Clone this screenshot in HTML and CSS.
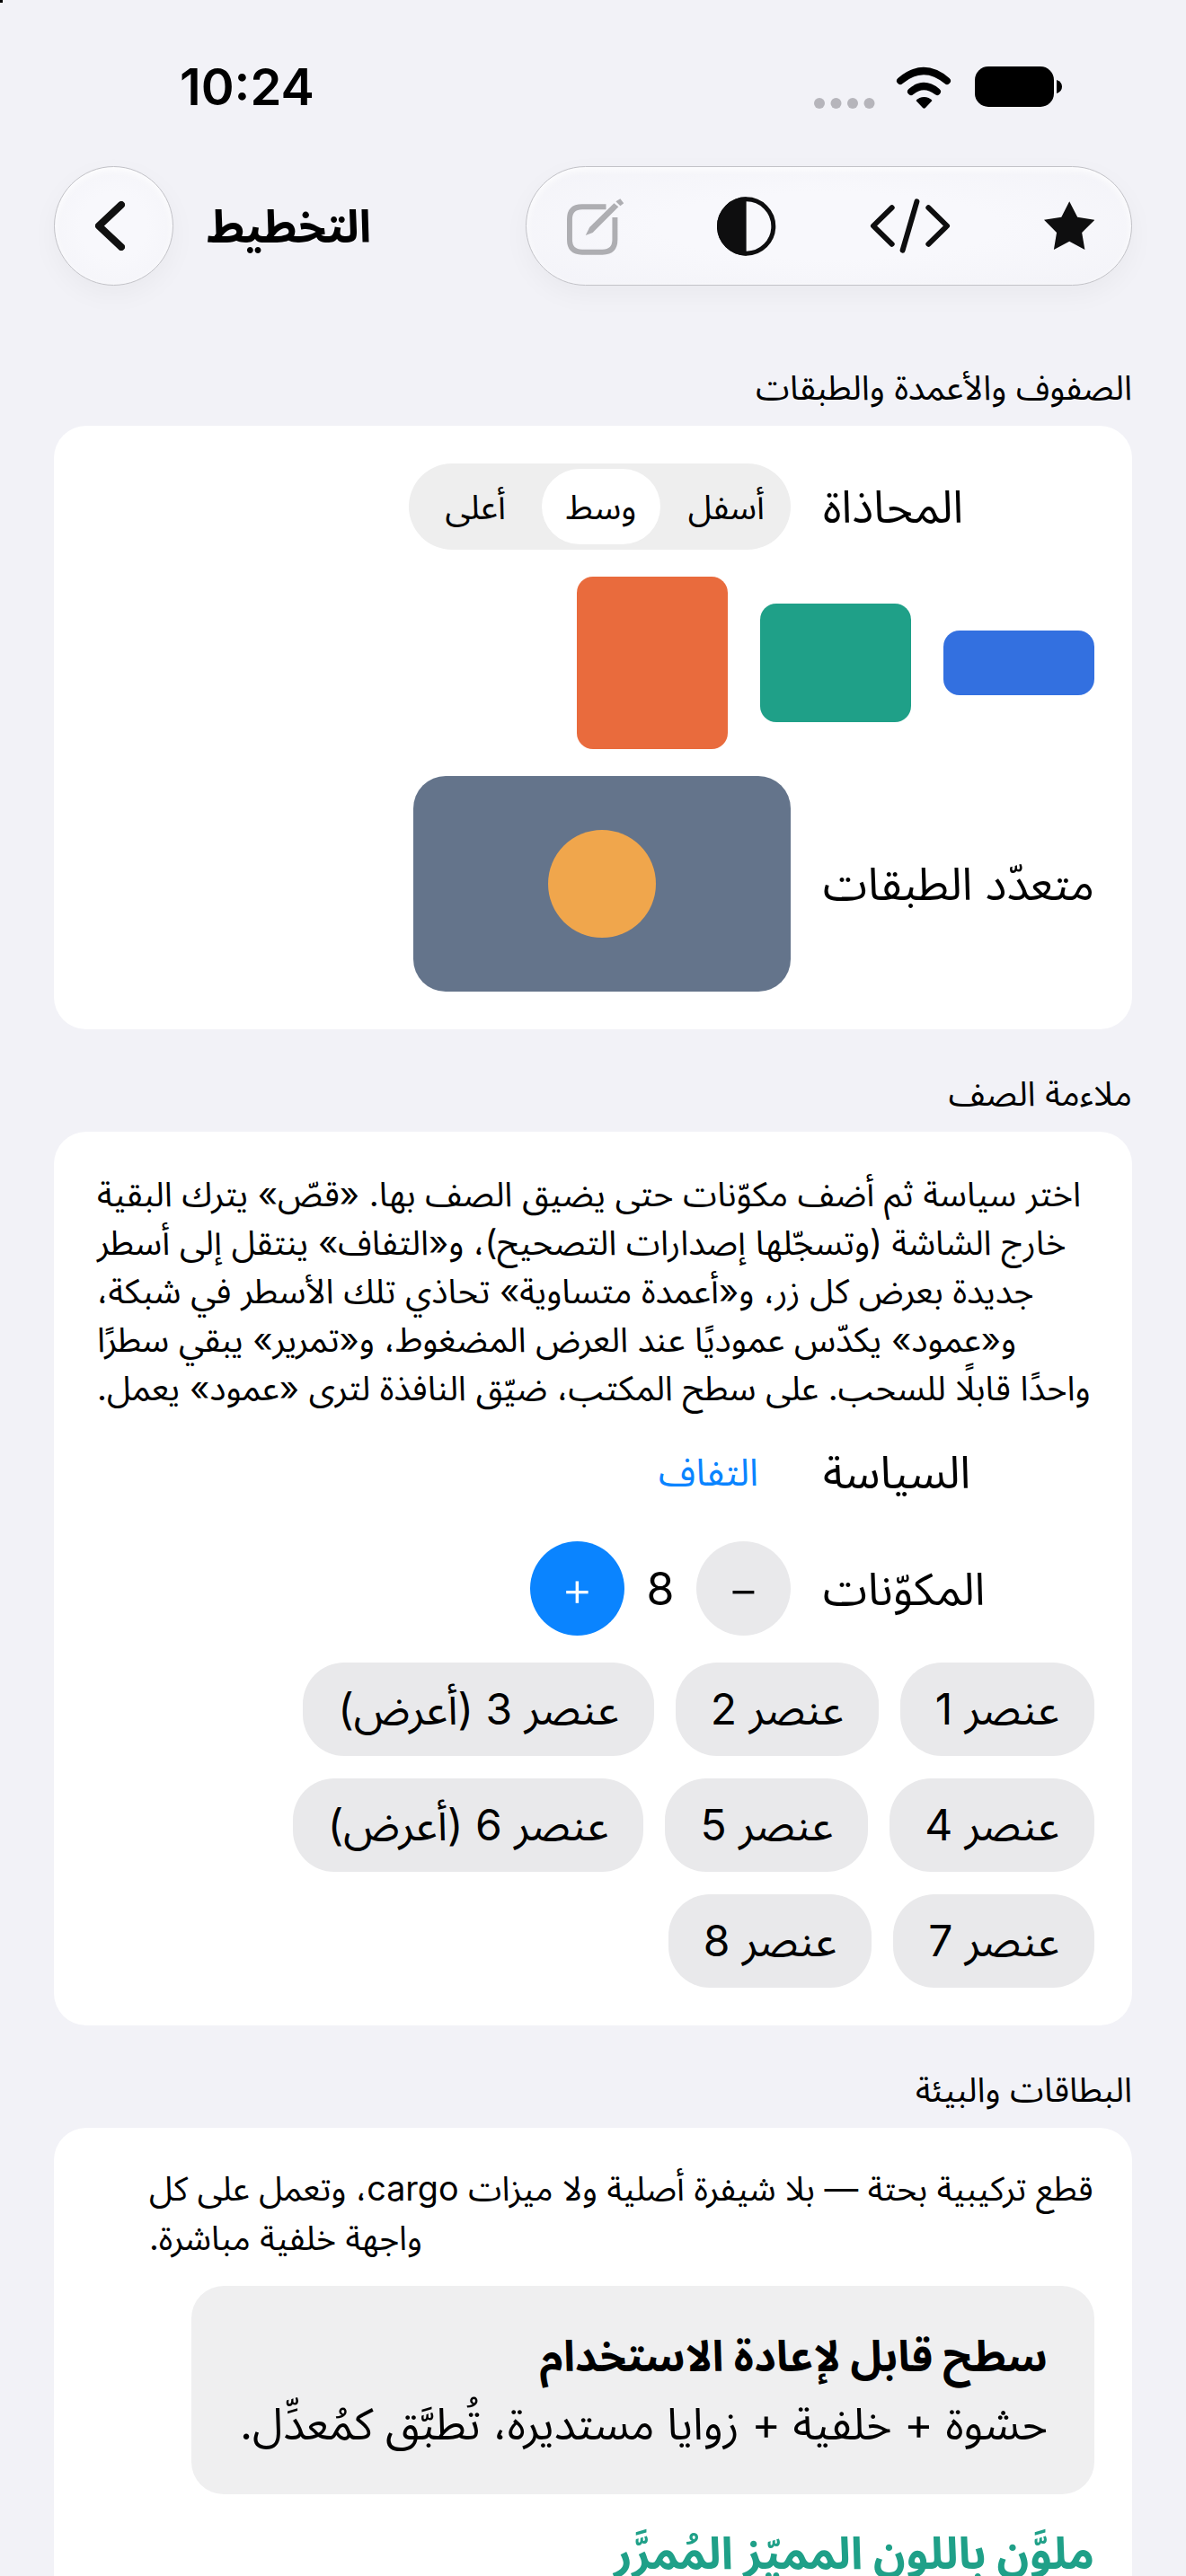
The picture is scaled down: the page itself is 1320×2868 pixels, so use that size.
FILE: index.html
```html
<!DOCTYPE html>
<html lang="ar">
<head>
<meta charset="utf-8">
<title>التخطيط</title>
<link rel="stylesheet" href="styles.css">
</head>
<body>
<div class="speck"></div>
<header class="status">
  <span class="time">10:24</span>
  <svg class="status-icons" viewBox="900 70 290 55" aria-hidden="true">
    <g fill="#b6b5bb"><circle cx="912" cy="115" r="6"/><circle cx="930.500" cy="115" r="6"/><circle cx="949" cy="115" r="6"/><circle cx="967.500" cy="115" r="6"/></g>
    <g fill="none" stroke="#000" stroke-width="8" stroke-linecap="round"><path d="M1002 90Q1028 68 1054 90"/><path d="M1014 102Q1028 90 1043 102"/></g>
    <path d="M1028.500 108Q1034 108 1037.500 112L1030 120Q1028.500 121.500 1027 120L1019.500 112Q1023 108 1028.500 108Z"/>
    <rect x="1085" y="74" width="88" height="45" rx="15"/>
    <path d="M1176 89Q1182 91 1182 96.500Q1182 102 1176 104Z"/>
  </svg>
</header>
<nav class="nav">
  <div class="nav-start">
    <button class="glass back" type="button">
      <svg class="chev" viewBox="0 0 33 55"><path d="M29 4L4 27.500L29 51"/></svg>
    </button>
    <h1 class="title">التخطيط</h1>
  </div>
  <div class="glass pill">
    <svg class="ic-edit" viewBox="0 0 64 64">
      <path class="edit-box" d="M44 10H17Q3 10 3 24V47Q3 61 17 61H40Q54 61 54 47V22"/>
      <path class="edit-pen" d="M21 42L25.500 33L53 6L58 10L29 39Z"/><path class="edit-pen" d="M55 4L60 1L64 6L60 9Z"/>
    </svg>
    <svg class="ic-contrast" viewBox="0 0 66 66">
      <circle cx="33" cy="33" r="30.500"/><path d="M33 0A33 33 0 0 0 33 66Z"/>
    </svg>
    <svg class="ic-code" viewBox="0 0 91 61">
      <path d="M25 10L4 30.500L25 51"/><path d="M53 3L37 58"/><path d="M66 10L87 30.500L66 51"/>
    </svg>
    <svg class="ic-star" viewBox="0 0 57 55">
      <path d="M28.500 0L37.600 17.700L57 20.700L42.600 35L45.900 54.300L28.500 45L11 54.300L14.200 35L0 20.700L19.500 17.700Z"/>
    </svg>
  </div>
</nav>
<main class="content" dir="rtl">
  <section class="section">
    <h2 class="section-title">الصفوف والأعمدة والطبقات</h2>
    <div class="card card-rows">
      <div class="row">
        <span class="label">المحاذاة</span>
        <div class="segmented">
          <span class="seg">أسفل</span>
          <span class="seg seg-on">وسط</span>
          <span class="seg">أعلى</span>
        </div>
      </div>
      <div class="blocks">
        <div class="block block-blue"></div>
        <div class="block block-green"></div>
        <div class="block block-orange"></div>
      </div>
      <div class="row">
        <span class="label">متعدّد الطبقات</span>
        <div class="stack"><div class="dot"></div></div>
      </div>
    </div>
  </section>
  <section class="section">
    <h2 class="section-title">ملاءمة الصف</h2>
    <div class="card">
      <p class="para">اختر سياسة ثم أضف مكوّنات حتى يضيق الصف بها. «قصّ» يترك البقية<br>خارج الشاشة (وتسجّلها إصدارات التصحيح)، و«التفاف» ينتقل إلى أسطر<br>جديدة بعرض كل زر، و«أعمدة متساوية» تحاذي تلك الأسطر في شبكة،<br>و«عمود» يكدّس عموديًا عند العرض المضغوط، و«تمرير» يبقي سطرًا<br>واحدًا قابلًا للسحب. على سطح المكتب، ضيّق النافذة لترى «عمود» يعمل.</p>
      <div class="row row-policy">
        <span class="label">السياسة</span>
        <span class="value">التفاف</span>
      </div>
      <div class="row row-stepper">
        <span class="label">المكوّنات</span>
        <div class="stepper">
          <span class="round round-minus">−</span>
          <span class="count">8</span>
          <span class="round round-plus">+</span>
        </div>
      </div>
      <div class="chips">
        <span class="chip">عنصر 1</span>
        <span class="chip">عنصر 2</span>
        <span class="chip">عنصر 3 (أعرض)</span>
        <span class="chip">عنصر 4</span>
        <span class="chip">عنصر 5</span>
        <span class="chip">عنصر 6 (أعرض)</span>
        <span class="chip">عنصر 7</span>
        <span class="chip">عنصر 8</span>
      </div>
    </div>
  </section>
  <section class="section">
    <h2 class="section-title">البطاقات والبيئة</h2>
    <div class="card card-env">
      <p class="para para-env">قطع تركيبية بحتة — بلا شيفرة أصلية ولا ميزات cargo، وتعمل على كل<br>واجهة خلفية مباشرة.</p>
      <div class="surface">
        <h3 class="surface-title">سطح قابل لإعادة الاستخدام</h3>
        <p class="surface-text">حشوة + خلفية + زوايا مستديرة، تُطبَّق كمُعدِّل.</p>
      </div>
      <h3 class="accent">ملوَّن باللون المميّز المُمرَّر</h3>
    </div>
  </section>
</main>
</body>
</html>
```
FILE: styles.css
```css
* { box-sizing: border-box; }
html, body { height: 2868px; overflow: hidden; }
body {
  margin: 0;
  position: relative;
  background: #f2f2f7;
  color: #000;
  font-family: Inter, "Noto Sans Arabic", "Noto Sans", sans-serif;
}
.speck { position: absolute; left: 0; top: 0; width: 3px; height: 3px; background: #000; }

.status { display: flex; justify-content: space-between; height: 185px; padding: 70px 130px 0 200px; }
.time { margin-top: 1px; font-size: 56px; font-weight: 600; line-height: 52px; }
.status-icons { width: 290px; height: 55px; }

.nav { display: flex; justify-content: space-between; height: 133px; padding: 0 60px; }
.nav-start { display: flex; align-items: center; gap: 37px; }
.glass {
  background: radial-gradient(ellipse at center, #f8f8fc 40%, #f3f3f8 100%);
  border: 1px solid #c2c2c7;
  box-shadow: 0 10px 30px rgba(0, 0, 0, .04), inset 0 3px 8px rgba(255, 255, 255, .9);
}
.back { display: flex; align-items: center; justify-content: center; width: 133px; height: 133px; padding: 0 8px 0 0; border-radius: 50%; }
.chev { width: 33px; height: 55px; fill: none; stroke: #111; stroke-width: 8; stroke-linecap: round; stroke-linejoin: round; }
.title { margin: 0; font-size: 50px; font-weight: 700; line-height: 60px; }
.pill { display: flex; align-items: center; gap: 104px; width: 675px; height: 133px; padding: 0 41px 0 45px; border-radius: 66.5px; }
.ic-edit { width: 64px; height: 64px; }
.edit-box { fill: none; stroke: #aeaeb2; stroke-width: 6; }
.edit-pen { fill: #aeaeb2; }
.ic-contrast { width: 66px; height: 66px; }
.ic-contrast circle { fill: none; stroke: #0e0e0f; stroke-width: 5; }
.ic-contrast path { fill: #0e0e0f; }
.ic-code { width: 91px; height: 61px; fill: none; stroke: #0e0e0f; stroke-width: 6; stroke-linecap: round; stroke-linejoin: round; }
.ic-star { width: 57px; height: 55px; fill: #0e0e0f; }

.content { display: flex; flex-direction: column; gap: 48px; padding: 90px 60px 0; }
.section-title { margin: 0 0 20px; font-size: 38px; font-weight: 400; line-height: 46px; }
.card { padding: 42px; background: #fff; border-radius: 36px; }
.card-rows { display: flex; flex-direction: column; gap: 30px; }

.row { display: flex; align-items: center; gap: 36px; }
.label { flex: none; width: 302px; font-size: 50px; line-height: 60px; text-align: left; }
.segmented { display: flex; align-items: center; gap: 14px; height: 96px; padding: 6px; background: #eee; border-radius: 48px; }
.seg { display: flex; align-items: center; height: 84px; padding: 0 26.500px; font-size: 38px; line-height: 50px; border-radius: 42px; }
.seg:first-child { padding: 0 23px 0 17px; }
.seg:last-child { padding: 0 26.500px 0 34.500px; }
.seg-on { background: #fff; }

.blocks { display: flex; align-items: center; gap: 36px; }
.block { width: 168px; border-radius: 18px; }
.block-blue { height: 72px; background: #3370e0; }
.block-green { height: 132px; background: #1fa088; }
.block-orange { height: 192px; background: #e96b3d; }

.stack { display: flex; align-items: center; justify-content: center; width: 420px; height: 240px; background: #64748b; border-radius: 36px; }
.dot { width: 120px; height: 120px; background: #f0a64c; border-radius: 50%; }

.para { margin: 0 0 0 6px; font-size: 38.200px; line-height: 54px; text-align: left; white-space: nowrap; }
.row-policy { height: 84px; margin-top: 30px; padding-bottom: 10px; }
.value { padding: 0 36px; color: #0a84ff; font-size: 42px; line-height: 60px; }
.row-stepper { margin-top: 30px; }
.stepper { display: flex; align-items: center; gap: 24px; }
.round { display: flex; align-items: center; justify-content: center; width: 105px; height: 105px; font-size: 54px; font-weight: 300; line-height: 1; border-radius: 50%; }
.round-minus { background: #e9e9eb; }
.round-plus { background: #0a84ff; color: #fff; }
.count { width: 32px; font-size: 50px; line-height: 60px; text-align: center; }
.chips { display: flex; flex-wrap: wrap; gap: 25px 24px; margin-top: 30px; }
.chip { display: flex; align-items: center; height: 104px; padding: 0 39px; background: #e9e9eb; font-size: 48px; line-height: 60px; border-radius: 46px; }

.para-env { width: 1052px; margin: -2px 0 0; font-size: 37.700px; line-height: 55px; }
.surface { width: 1005px; margin-top: 26px; padding: 45px 52px; background: #efeff0; border-radius: 36px; }
.surface-title { margin: 0; font-size: 47.500px; font-weight: 700; line-height: 66px; }
.surface-text { margin: 10px 0 0; font-size: 49px; line-height: 66px; }
.accent { margin: 32px 0 0; color: #1fa088; font-size: 49.500px; font-weight: 700; line-height: 66px; }
```
